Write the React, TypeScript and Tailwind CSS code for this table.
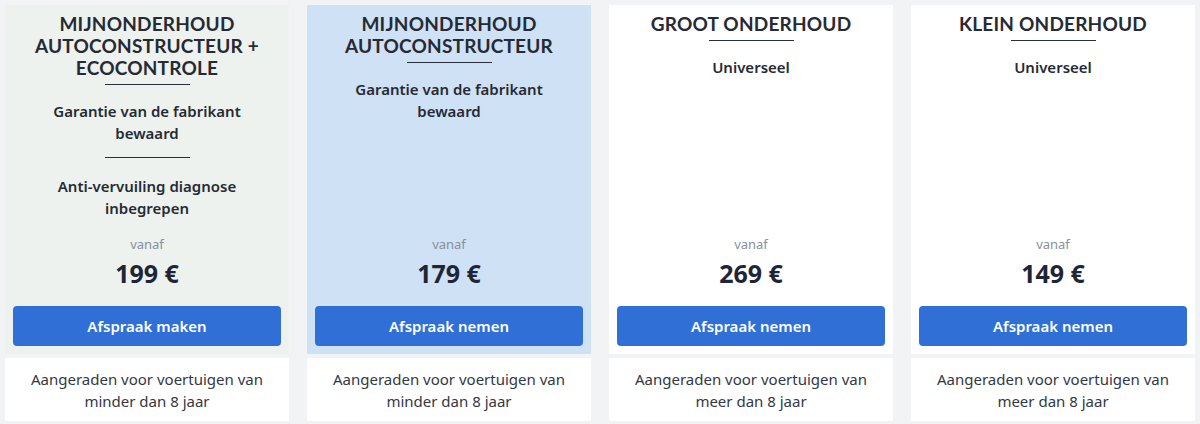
import React from "react";

type Plan = {
  title: string[];
  features: string[];
  price: string;
  cta: string;
  note: string[];
  bg: string;
};

const plans: Plan[] = [
  {
    title: ["MIJNONDERHOUD", "AUTOCONSTRUCTEUR +", "ECOCONTROLE"],
    features: ["Garantie van de fabrikant bewaard", "Anti-vervuiling diagnose inbegrepen"],
    price: "199 €",
    cta: "Afspraak maken",
    note: ["Aangeraden voor voertuigen van", "minder dan 8 jaar"],
    bg: "bg-[#edf2ee]",
  },
  {
    title: ["MIJNONDERHOUD", "AUTOCONSTRUCTEUR"],
    features: ["Garantie van de fabrikant bewaard"],
    price: "179 €",
    cta: "Afspraak nemen",
    note: ["Aangeraden voor voertuigen van", "minder dan 8 jaar"],
    bg: "bg-[#cfe1f5]",
  },
  {
    title: ["GROOT ONDERHOUD"],
    features: ["Universeel"],
    price: "269 €",
    cta: "Afspraak nemen",
    note: ["Aangeraden voor voertuigen van", "meer dan 8 jaar"],
    bg: "bg-white",
  },
  {
    title: ["KLEIN ONDERHOUD"],
    features: ["Universeel"],
    price: "149 €",
    cta: "Afspraak nemen",
    note: ["Aangeraden voor voertuigen van", "meer dan 8 jaar"],
    bg: "bg-white",
  },
];

const Rule = () => <div className="mx-auto h-px w-[85px] bg-[#2a2e38]" />;

const PlanCard: React.FC<{ plan: Plan }> = ({ plan }) => {
  return (
    <div className="flex flex-col gap-1">
      <div className={`flex h-[349px] flex-col px-2 pt-2 pb-2 ${plan.bg}`}>
        <h2 className="font-['Lato'] text-center text-[19px] font-bold leading-[22px] tracking-[0.2px] text-[#262a35]">
          {plan.title.map((l) => (
            <div key={l}>{l}</div>
          ))}
        </h2>
        <div className="mt-[5px]">
          <Rule />
        </div>
        {plan.features.map((f, i) => (
          <div key={f}>
            {i > 0 && (
              <div className="mt-[13px]">
                <Rule />
              </div>
            )}
            <p
              className={`mx-auto max-w-[200px] text-center text-[15px] font-semibold leading-[22px] text-[#262a35] ${
                i > 0 ? "mt-[17px]" : "mt-[15px]"
              }`}
            >
              {f}
            </p>
          </div>
        ))}
        <div className="mt-auto text-center">
          <div className="text-[13px] leading-[18px] text-[#8a8f99]">vanaf</div>
          <div className="mt-[5px] text-[25px] font-bold leading-[30px] text-[#1f2535]">{plan.price}</div>
        </div>
        <button className="mt-[18px] h-10 w-full rounded-[4px] bg-[#2f6fd6] text-[15px] font-semibold text-white">
          {plan.cta}
        </button>
      </div>
      <div className="flex h-[63px] flex-col items-center justify-center bg-white text-center text-[15px] leading-[22px] text-[#333844]">
        {plan.note.map((l) => (
          <div key={l}>{l}</div>
        ))}
      </div>
    </div>
  );
};

export default function App() {
  return (
    <div
      className="h-[424px] w-[1200px] bg-[#f2f3f5] p-[5px]"
      style={{ fontFamily: "'Noto Sans', Lato, sans-serif" }}
    >
      <div className="grid grid-cols-4 gap-[18px]">
        {plans.map((p) => (
          <PlanCard key={p.price} plan={p} />
        ))}
      </div>
    </div>
  );
}
